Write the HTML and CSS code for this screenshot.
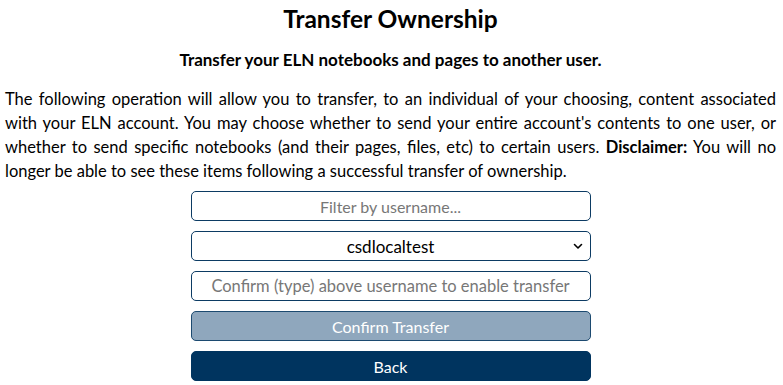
FILE: index.html
```html
<!DOCTYPE html>
<html>
<head>
<meta charset="utf-8">
<link rel="stylesheet" href="styles.css">
</head>
<body>
<div class="page">
  <h1 class="title">Transfer Ownership</h1>
  <h2 class="subtitle">Transfer your ELN notebooks and pages to another user.</h2>
  <p class="intro">The following operation will allow you to transfer, to an individual of your choosing, content associated with your ELN account. You may choose whether to send your entire account's contents to one user, or whether to send specific notebooks (and their pages, files, etc) to certain users. <b>Disclaimer:</b> You will no longer be able to see these items following a successful transfer of ownership.</p>
  <form class="form">
    <input class="field" type="text" placeholder="Filter by username...">
    <div class="select-wrap">
      <select class="field select">
        <option>csdlocaltest</option>
      </select>
      <svg class="chev" width="10" height="7" viewBox="0 0 10 7"><path d="M1.5 1.5 L5 5 L8.5 1.5" fill="none" stroke="#000" stroke-width="1.6" stroke-linecap="round" stroke-linejoin="round"/></svg>
    </div>
    <input class="field field-wide" type="text" placeholder="Confirm (type) above username to enable transfer">
    <button class="btn btn-disabled" type="button">Confirm Transfer</button>
    <button class="btn btn-primary" type="button">Back</button>
  </form>
</div>
</body>
</html>
```
FILE: styles.css
```css
html, body {
  margin: 0;
  padding: 0;
  background: #fff;
}
body {
  font-family: Lato, "Open Sans", sans-serif;
  color: #000;
}
.page {
  padding: 0 7px 0 5px;
}
.title {
  margin: 0;
  padding-top: 4px;
  text-align: center;
  font-size: 24.5px;
  line-height: 30px;
  font-weight: 700;
}
.subtitle {
  margin: 16px 0 0;
  text-align: center;
  font-size: 17px;
  line-height: 20px;
  font-weight: 700;
}
.intro {
  margin: 17px 0 0;
  font-size: 16.5px;
  line-height: 24px;
  text-align: justify;
}
.intro b {
  font-weight: 700;
}
.form {
  width: 400px;
  margin: 8px auto 0;
  display: flex;
  flex-direction: column;
  gap: 10px;
}
.field {
  box-sizing: border-box;
  width: 100%;
  height: 30px;
  border: 1px solid #0c3b63;
  border-radius: 5px;
  background: #fff;
  font-family: Lato, sans-serif;
  font-size: 16px;
  text-align: center;
  color: #000;
  padding: 0 8px;
  margin: 0;
  outline: none;
}
.field-wide {
  font-size: 16.5px;
}
.field::placeholder {
  color: #777;
}
.select-wrap {
  position: relative;
}
.select {
  appearance: none;
  -webkit-appearance: none;
  text-align-last: center;
  font-size: 17px;
  padding-right: 24px;
  padding-left: 24px;
}
.chev {
  position: absolute;
  right: 8px;
  top: 12px;
  pointer-events: none;
}
.btn {
  box-sizing: border-box;
  width: 100%;
  height: 30px;
  border-radius: 5px;
  font-family: Lato, sans-serif;
  font-size: 16px;
  color: #fff;
  margin: 0;
  padding: 0;
}
.btn-disabled {
  background: #8fa7bd;
  border: 1px solid #1c4a70;
}
.btn-primary {
  background: #00345f;
  border: 1px solid #00345f;
}
```
